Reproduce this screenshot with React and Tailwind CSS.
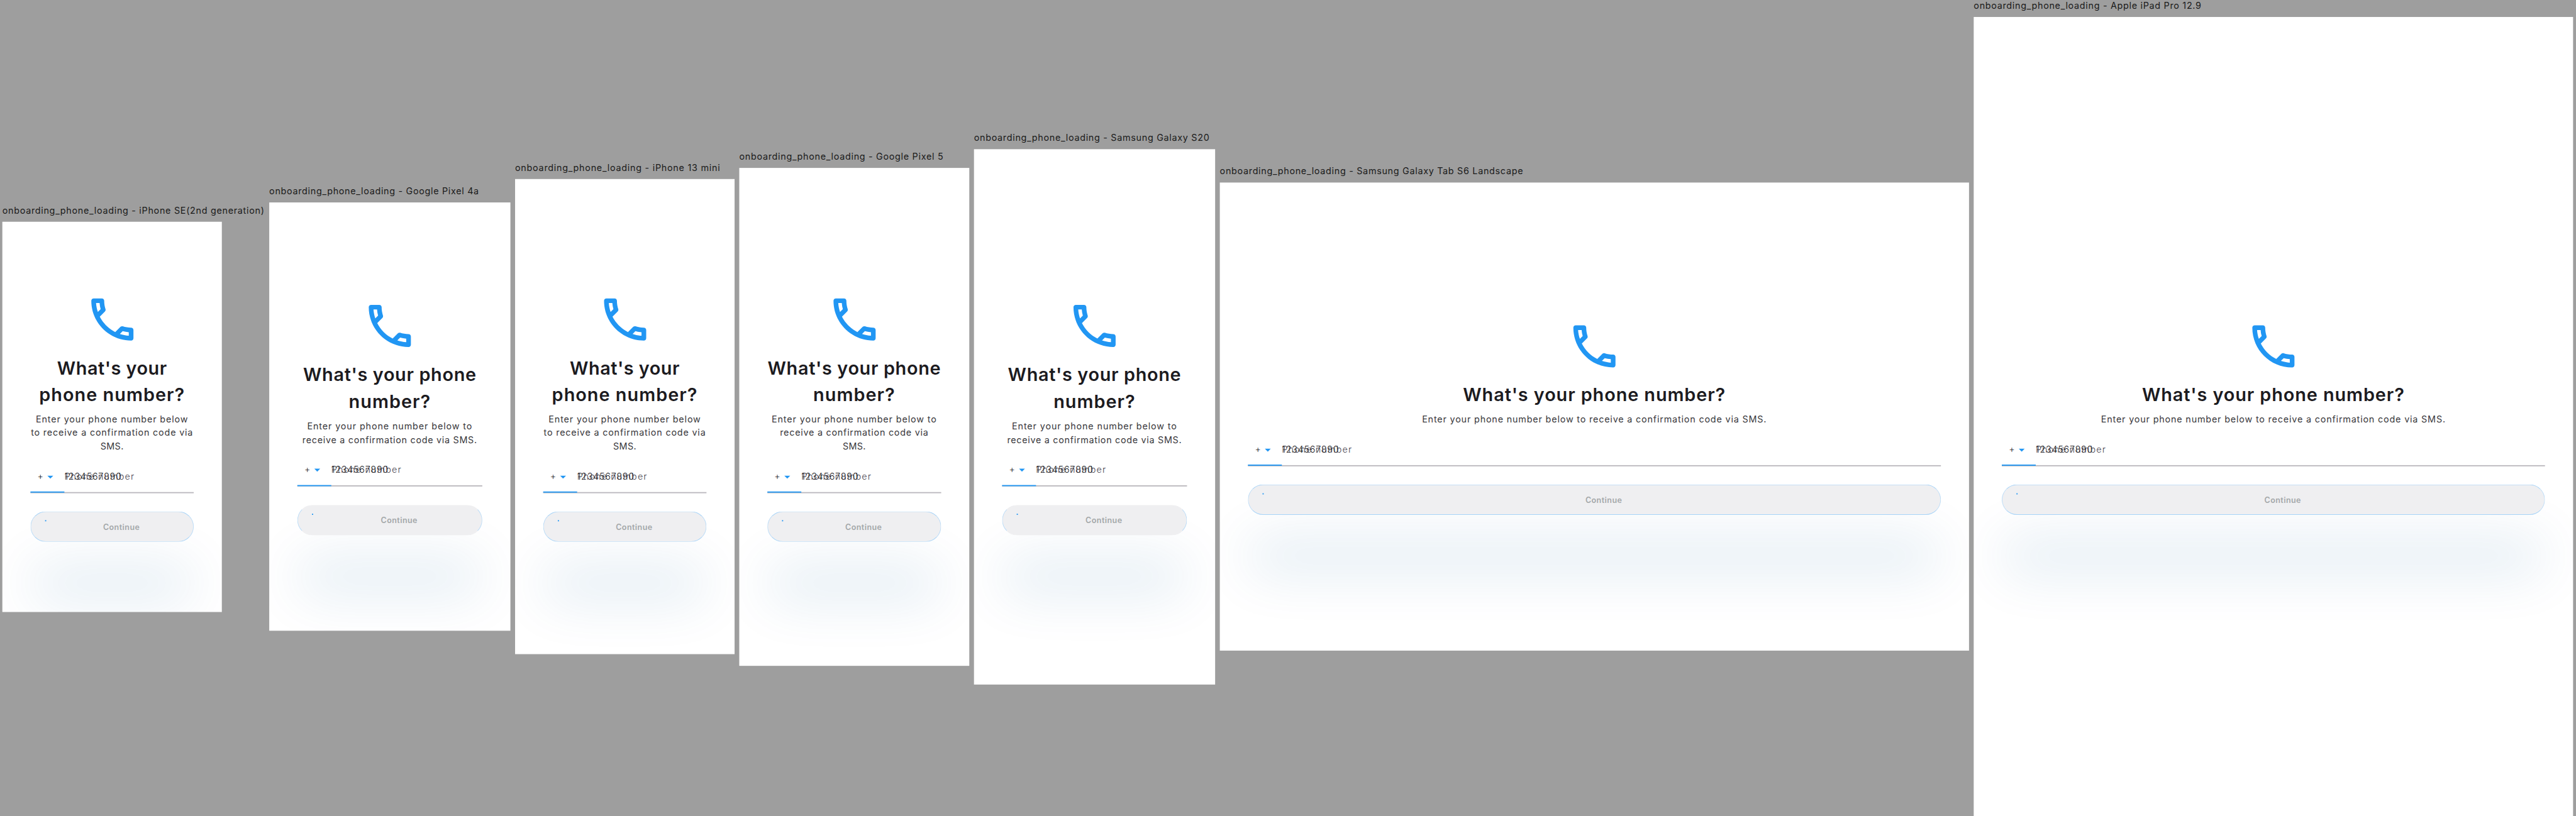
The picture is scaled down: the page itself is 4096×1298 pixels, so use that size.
const ONE_LINE = {
  heading: [["What's your phone number?", "tracking-[0.97px]"]],
  body: [["Enter your phone number below to receive a confirmation code via SMS.", "tracking-[0.9px]"]],
};

const IPHONE = {
  heading: [["What's your", "tracking-[0.54px]"], ["phone number?", "tracking-[1.08px]"]],
  body: [
    ["Enter your phone number below", "tracking-[0.94px]"],
    ["to receive a confirmation code via", "tracking-[0.89px]"],
    ["SMS.", "tracking-[0.4px]"],
  ],
};

const WIDE_PHONE = {
  heading: [["What's your phone", "tracking-[0.7px]"], ["number?", "tracking-[1.08px]"]],
  body: [
    ["Enter your phone number below to", "tracking-[0.96px]"],
    ["receive a confirmation code via SMS.", "tracking-[0.77px]"],
  ],
};

const PIXEL_5 = {
  heading: WIDE_PHONE.heading,
  body: [
    ["Enter your phone number below to", "tracking-[0.96px]"],
    ["receive a confirmation code via", "tracking-[0.82px]"],
    ["SMS.", "tracking-[0.4px]"],
  ],
};

const DEVICES = [
  { name: "iPhone SE(2nd generation)", column: "w-[448px]", size: "w-[375px] h-[667px]", offset: "pt-[119px]", label: "tracking-[0.77px]", copy: IPHONE, outlined: true },
  { name: "Google Pixel 4a", column: "w-[412px]", size: "w-[412px] h-[732px]", offset: "pt-[163px]", label: "tracking-[0.76px]", copy: WIDE_PHONE, outlined: false },
  { name: "iPhone 13 mini", column: "w-[375px]", size: "w-[375px] h-[812px]", offset: "pt-[191.5px]", label: "tracking-[0.81px]", copy: IPHONE, outlined: true },
  { name: "Google Pixel 5", column: "w-[393px]", size: "w-[393px] h-[851px]", offset: "pt-[211px]", label: "tracking-[0.77px]", copy: PIXEL_5, outlined: true },
  { name: "Samsung Galaxy S20", column: "w-[412px]", size: "w-[412px] h-[915px]", offset: "pt-[254.5px]", label: "tracking-[0.77px]", copy: WIDE_PHONE, outlined: false },
  { name: "Samsung Galaxy Tab S6 Landscape", column: "w-[1280px]", size: "w-[1280px] h-[800px]", offset: "pt-[231.5px]", label: "tracking-[0.77px]", copy: ONE_LINE, outlined: true },
  { name: "Apple iPad Pro 12.9", column: "w-[1024px]", size: "w-[1024px] h-[1366px]", offset: "pt-[514.5px]", label: "tracking-[0.77px]", copy: ONE_LINE, outlined: true },
];

function PhoneIcon() {
  return (
    <svg viewBox="0 0 24 24" className="size-24 shrink-0 fill-[#2196f3]">
      <path d="M6.54 5c.06.89.21 1.76.45 2.59l-1.2 1.2c-.41-1.2-.67-2.47-.76-3.79h1.51m9.86 12.02c.85.24 1.72.39 2.6.45v1.49c-1.32-.09-2.59-.35-3.8-.75l1.2-1.19M7.5 3H4c-.55 0-1 .45-1 1 0 9.39 7.61 17 17 17 .55 0 1-.45 1-1v-3.49c0-.55-.45-1-1-1-1.24 0-2.45-.2-3.57-.57-.1-.04-.21-.05-.31-.05-.26 0-.51.1-.71.29l-2.2 2.2c-2.83-1.45-5.15-3.76-6.59-6.59l2.2-2.2c.28-.28.36-.67.25-1.02C8.7 6.45 8.5 5.25 8.5 4c0-.55-.45-1-1-1z" />
    </svg>
  );
}

function PhoneField({ outlined }) {
  return (
    <div className="relative flex h-[68px] w-full pt-[28.2px] text-[15.4px] leading-[23px] font-light whitespace-nowrap">
      <div className="flex w-[58px] shrink-0">
        <span className="w-[22px] pl-[12px] text-[#1c1b1f]">+</span>
        <svg viewBox="0 0 24 24" className="size-6 shrink-0 fill-[#2196f3]">
          <path d="M7 10l5 5 5-5z" />
        </svg>
      </div>
      <div className="relative">
        <span className="tracking-[1.24px] text-[#49454f]">Phone number</span>
        <span className="absolute top-0 left-0 tracking-[0.85px] text-[#1c1b1f]">1234567890</span>
      </div>
      <div className={outlined ? "absolute inset-x-0 -bottom-[0.5px] h-[2px] bg-[#bbb9be]" : "absolute inset-x-0 bottom-0 h-px bg-[#79747e]"} />
      <div className="absolute bottom-0 left-0 h-[2px] w-[58px] bg-[#2196f3]" />
    </div>
  );
}

function ContinueButton({ outlined }) {
  return (
    <div
      className={
        "relative mt-8 flex h-[52px] w-full shrink-0 items-center justify-center rounded-full border border-x-[#bcdcf7] bg-[#efeff1] pt-px pl-8 shadow-[0_96px_92px_rgba(8,92,155,0.14)] " +
        (outlined ? "border-y-[#a6d3f8]" : "border-y-[#efeff1]")
      }
    >
      <span className="absolute top-[14px] left-[24px] size-[2px] bg-[#2196f3]" />
      <span className="text-[13.4px] leading-5 font-semibold tracking-[0.5px] text-[#a3a7a9]">Continue</span>
    </div>
  );
}

function Device({ name, column, size, offset, label, copy, outlined }) {
  return (
    <section className={"flex shrink-0 flex-col " + column}>
      <h2 className={"h-[29px] text-[15.4px] leading-[20.4px] font-normal whitespace-nowrap text-[#1a1a1a] " + label}>
        {"onboarding_phone_loading - " + name}
      </h2>
      <div className={"flex flex-col items-center overflow-hidden bg-white px-12 " + size + " " + offset}>
        <PhoneIcon />
        <div className="mt-[12.2px] text-center text-[31px] leading-[46px] font-semibold whitespace-nowrap text-[#1c1b1f]">
          {copy.heading.map(([text, tracking]) => (
            <div key={text} className={tracking}>{text}</div>
          ))}
        </div>
        <div className="mt-[7.8px] text-center text-[15.4px] leading-[23px] font-normal whitespace-nowrap text-[#38373b]">
          {copy.body.map(([text, tracking]) => (
            <div key={text} className={tracking}>{text}</div>
          ))}
        </div>
        <PhoneField outlined={outlined} />
        <ContinueButton outlined={outlined} />
      </div>
    </section>
  );
}

export default function App() {
  return (
    <div className="h-screen w-screen overflow-hidden bg-[#9e9e9e] font-[Inter,sans-serif]">
      <main className="flex h-[1395px] w-[4401px] origin-top-left scale-[0.9307] items-center gap-2 pl-1">
        {DEVICES.map((device) => (
          <Device key={device.name} {...device} />
        ))}
      </main>
    </div>
  );
}
